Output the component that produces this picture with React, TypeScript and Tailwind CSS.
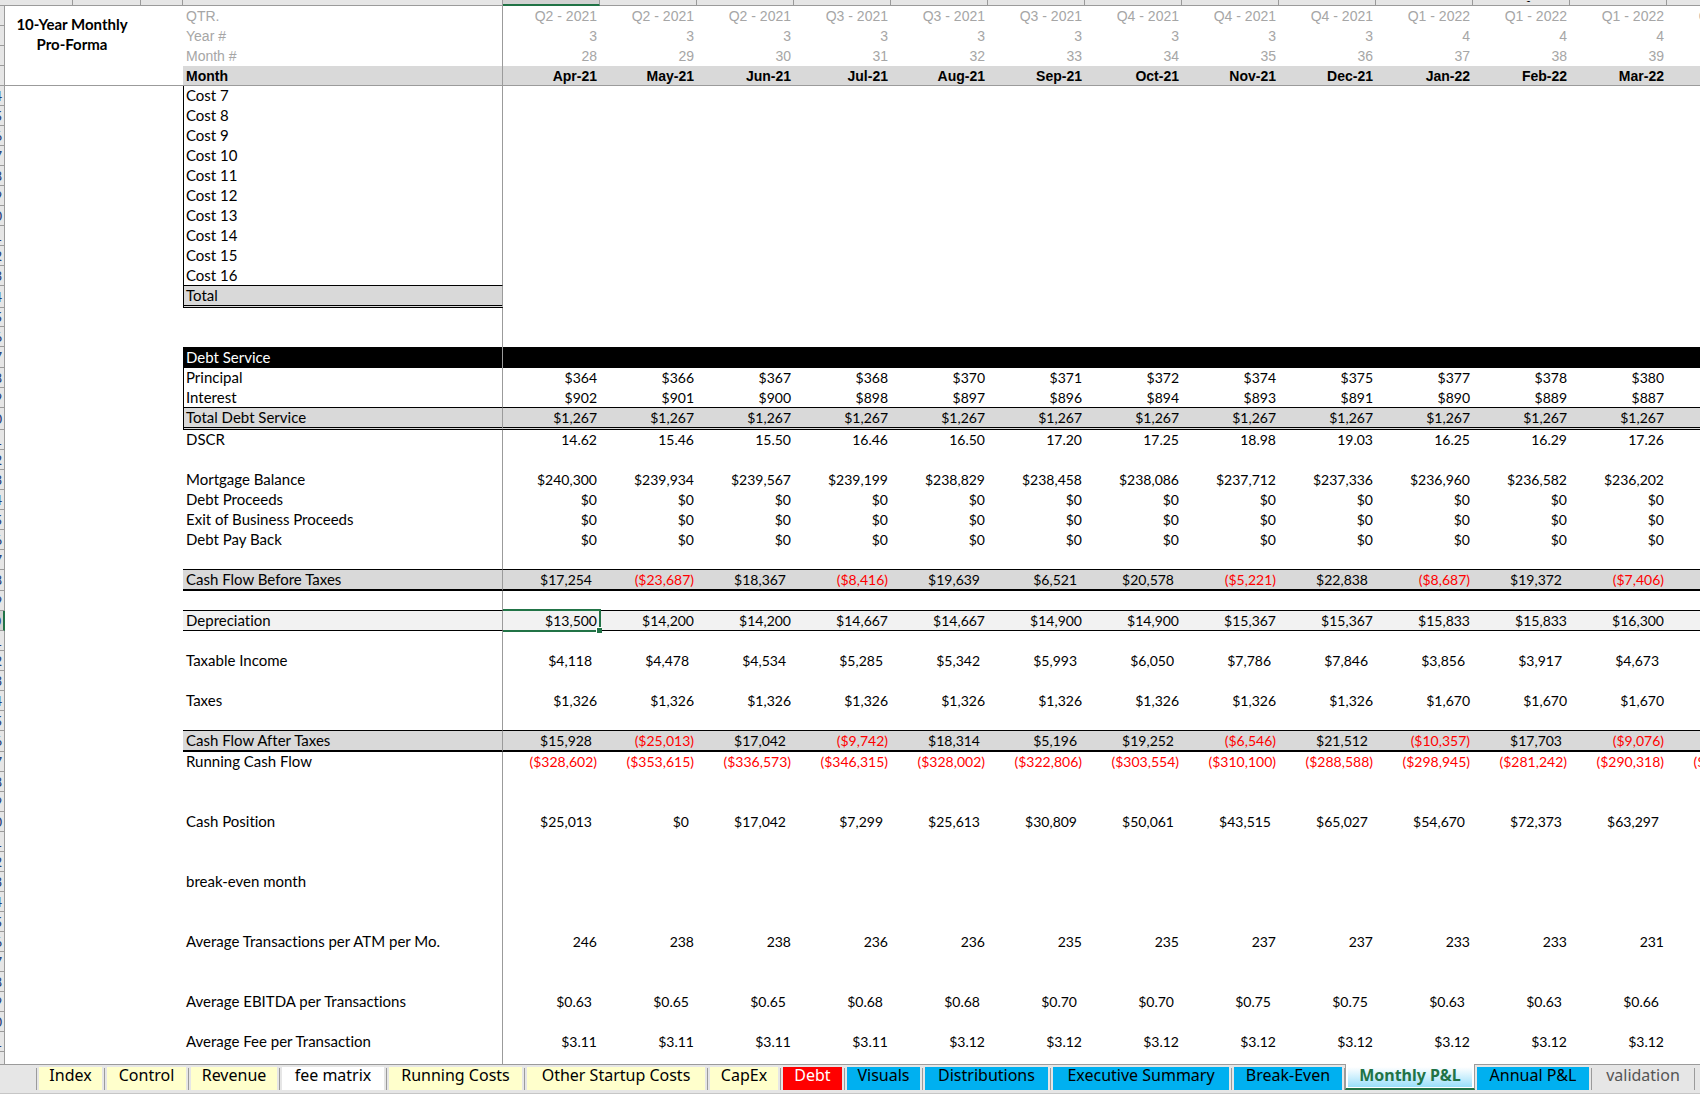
import React, { useState } from 'react'
import clsx from 'clsx'

type Variant = 'plain' | 'cost' | 'total' | 'section' | 'debt' | 'summary' | 'shaded'

interface Row {
  label?: string
  variant?: Variant
  values?: string[]
  // accounting format leaves room for a closing bracket
  accounting?: boolean
  height?: string
  // rule drawn below the row, above the next one
  rule?: boolean
}

const columns = ['AG', 'AH', 'AI', 'AJ', 'AK', 'AL', 'AM', 'AN', 'AO', 'AP', 'AQ', 'AR', 'AS']

const list = (text: string) => text.split(' ')
const same = (value: string) => columns.slice(0, 12).map(() => value)

const quarters = [
  'Q2 - 2021', 'Q2 - 2021', 'Q2 - 2021', 'Q3 - 2021', 'Q3 - 2021', 'Q3 - 2021', 'Q4 - 2021',
  'Q4 - 2021', 'Q4 - 2021', 'Q1 - 2022', 'Q1 - 2022', 'Q1 - 2022', 'Q2 - 2022'
]
const years = list('3 3 3 3 3 3 3 3 3 4 4 4')
const monthNumbers = list('28 29 30 31 32 33 34 35 36 37 38 39')
const months = list('Apr-21 May-21 Jun-21 Jul-21 Aug-21 Sep-21 Oct-21 Nov-21 Dec-21 Jan-22 Feb-22 Mar-22')

const rows: Row[] = [
  { label: 'Cost 7', variant: 'cost' },
  { label: 'Cost 8', variant: 'cost' },
  { label: 'Cost 9', variant: 'cost' },
  { label: 'Cost 10', variant: 'cost' },
  { label: 'Cost 11', variant: 'cost' },
  { label: 'Cost 12', variant: 'cost' },
  { label: 'Cost 13', variant: 'cost' },
  { label: 'Cost 14', variant: 'cost' },
  { label: 'Cost 15', variant: 'cost' },
  { label: 'Cost 16', variant: 'cost', rule: true },
  { label: 'Total', variant: 'total', height: 'h-[22px]' },
  { height: 'h-[19px]' },
  {},
  { label: 'Debt Service', variant: 'section', height: 'h-[21px]' },
  { label: 'Principal', variant: 'cost', values: list('$364 $366 $367 $368 $370 $371 $372 $374 $375 $377 $378 $380') },
  { label: 'Interest', variant: 'cost', rule: true, values: list('$902 $901 $900 $898 $897 $896 $894 $893 $891 $890 $889 $887') },
  { label: 'Total Debt Service', variant: 'debt', height: 'h-[22px]', values: same('$1,267') },
  { label: 'DSCR', values: list('14.62 15.46 15.50 16.46 16.50 17.20 17.25 18.98 19.03 16.25 16.29 17.26') },
  {},
  { label: 'Mortgage Balance', values: list('$240,300 $239,934 $239,567 $239,199 $238,829 $238,458 $238,086 $237,712 $237,336 $236,960 $236,582 $236,202') },
  { label: 'Debt Proceeds', values: same('$0') },
  { label: 'Exit of Business Proceeds', values: same('$0') },
  { label: 'Debt Pay Back', values: same('$0') },
  { rule: true },
  { label: 'Cash Flow Before Taxes', variant: 'summary', accounting: true, height: 'h-[21px]', values: list('$17,254 ($23,687) $18,367 ($8,416) $19,639 $6,521 $20,578 ($5,221) $22,838 ($8,687) $19,372 ($7,406)') },
  { rule: true },
  { label: 'Depreciation', variant: 'shaded', values: list('$13,500 $14,200 $14,200 $14,667 $14,667 $14,900 $14,900 $15,367 $15,367 $15,833 $15,833 $16,300') },
  {},
  { label: 'Taxable Income', accounting: true, values: list('$4,118 $4,478 $4,534 $5,285 $5,342 $5,993 $6,050 $7,786 $7,846 $3,856 $3,917 $4,673') },
  {},
  { label: 'Taxes', values: list('$1,326 $1,326 $1,326 $1,326 $1,326 $1,326 $1,326 $1,326 $1,326 $1,670 $1,670 $1,670') },
  { rule: true },
  { label: 'Cash Flow After Taxes', variant: 'summary', accounting: true, height: 'h-[21px]', values: list('$15,928 ($25,013) $17,042 ($9,742) $18,314 $5,196 $19,252 ($6,546) $21,512 ($10,357) $17,703 ($9,076)') },
  { label: 'Running Cash Flow', accounting: true, values: list('($328,602) ($353,615) ($336,573) ($346,315) ($328,002) ($322,806) ($303,554) ($310,100) ($288,588) ($298,945) ($281,242) ($290,318) ($281,095)') },
  {},
  {},
  { label: 'Cash Position', accounting: true, values: list('$25,013 $0 $17,042 $7,299 $25,613 $30,809 $50,061 $43,515 $65,027 $54,670 $72,373 $63,297') },
  {},
  {},
  { label: 'break-even month' },
  {},
  {},
  { label: 'Average Transactions per ATM per Mo.', values: list('246 238 238 236 236 235 235 237 237 233 233 231') },
  {},
  {},
  { label: 'Average EBITDA per Transactions', accounting: true, values: list('$0.63 $0.65 $0.65 $0.68 $0.68 $0.70 $0.70 $0.75 $0.75 $0.63 $0.63 $0.66') },
  {},
  { label: 'Average Fee per Transaction', values: list('$3.11 $3.11 $3.11 $3.11 $3.12 $3.12 $3.12 $3.12 $3.12 $3.12 $3.12 $3.12') }
]

const labelFills: Record<Variant, string> = {
  plain: '',
  cost: '',
  total: 'bg-[#d9d9d9] border-b-3 border-b-black [border-bottom-style:double]',
  section: 'bg-black text-white',
  debt: 'bg-[#d9d9d9] border-b-3 border-b-black [border-bottom-style:double]',
  summary: 'bg-[#d9d9d9] border-b-2 border-b-black',
  shaded: 'bg-[#f2f2f2] border-b border-b-black'
}

const valueFills: Record<Variant, string> = { ...labelFills, total: '' }

const sheets = [
  { name: 'Index', width: 'w-[68px]', color: 'bg-[#ffffcc]' },
  { name: 'Control', width: 'w-[84px]', color: 'bg-[#ffffcc]' },
  { name: 'Revenue', width: 'w-[91px]', color: 'bg-[#ffffcc]' },
  { name: 'fee matrix', width: 'w-[107px]', color: 'bg-white' },
  { name: 'Running Costs', width: 'w-[138px]', color: 'bg-[#ffffcc]' },
  { name: 'Other Startup Costs', width: 'w-[183px]', color: 'bg-[#ffffcc]' },
  { name: 'CapEx', width: 'w-[73px]', color: 'bg-[#ffffcc]' },
  { name: 'Debt', width: 'w-[64px]', color: 'bg-[#ff0000] text-white' },
  { name: 'Visuals', width: 'w-[78px]', color: 'bg-[#00b0f0]' },
  { name: 'Distributions', width: 'w-[128px]', color: 'bg-[#00b0f0]' },
  { name: 'Executive Summary', width: 'w-[181px]', color: 'bg-[#00b0f0]' },
  { name: 'Break-Even', width: 'w-[113px]', color: 'bg-[#00b0f0]' },
  { name: 'Monthly P&L', width: 'w-[130px]', color: 'bg-linear-to-b from-white to-[#99dffa]' },
  { name: 'Annual P&L', width: 'w-[117px]', color: 'bg-[#00b0f0]' },
  { name: 'validation', width: 'w-[103px]', color: 'text-[#555555]' }
]

// The strip is only a few pixels wide, so just the edge of the last digit shows
const RowNumber: React.FC<{ value?: number; selected?: boolean }> = ({ value, selected }) => (
  <th
    className={clsx(
      'border-b border-b-[#9b9b9b] p-0 font-normal text-[#1f3f7a]',
      selected ? 'border-r-2 border-r-[#217346] bg-[#d2d2d2]' : 'border-r border-r-[#9b9b9b] bg-[#e6e6e6]'
    )}
  >
    {value !== undefined && <div className="flex h-4 justify-end overflow-hidden pr-[2px]">{value % 10}</div>}
  </th>
)

const HeaderRow: React.FC<{ label: string; values: string[]; title?: boolean }> = ({ label, values, title }) => (
  <tr className="h-5 font-['Liberation_Sans',sans-serif] text-[#a6a6a6]">
    <RowNumber />
    {title && (
      <th rowSpan={3} colSpan={2} className="p-0 pr-[2px] pb-1 text-center font-[Lato,sans-serif] text-[15px] leading-5 font-bold text-black">
        10-Year Monthly
        <br />
        Pro-Forma
      </th>
    )}
    <td></td>
    <td className="border-r border-r-[#9b9b9b] py-0 pl-[3px]">{label}</td>
    {columns.map((column, i) => (
      <td key={column} className="py-0 pr-[3px] text-right">{values[i]}</td>
    ))}
  </tr>
)

const SheetRow: React.FC<{ row: Row; number: number }> = ({ row, number }) => {
  const variant = row.variant ?? 'plain'
  const boxed = ['cost', 'total', 'section', 'debt'].includes(variant)
  const selected = row.label === 'Depreciation'
  // the cost list has no figures in view, so its rule stops at the label
  const valueRule = row.rule && row.label !== 'Cost 16'

  return (
    <tr className={row.height ?? 'h-5'}>
      <RowNumber value={number} selected={selected} />
      <td></td>
      <td></td>
      <td></td>
      <td
        className={clsx(
          'border-r border-r-[#9b9b9b] pt-0 pb-[2px] text-[15px]',
          boxed ? 'border-l border-l-black pl-[2px]' : 'pl-[3px]',
          labelFills[variant],
          row.rule && 'border-b border-b-black'
        )}
      >
        {row.label}
      </td>
      {columns.map((column, i) => {
        const value = row.values?.[i] ?? ''
        const negative = value.startsWith('(')
        const active = selected && i === 0
        return (
          <td
            key={column}
            className={clsx(
              'py-0 text-right',
              row.accounting && !negative ? 'pr-2' : 'pr-[3px]',
              negative && 'text-[#ff0000]',
              valueFills[variant],
              valueRule && 'border-b border-b-black',
              active && 'relative'
            )}
          >
            {value}
            {active && (
              <span className="absolute -top-[2px] -right-px -bottom-[2px] left-0 border-y-2 border-r-2 border-[#217346]">
                <span className="absolute -right-[3px] -bottom-[3px] size-[6px] border-t border-l border-white bg-[#217346]"></span>
              </span>
            )}
          </td>
        )
      })}
    </tr>
  )
}

export default function App() {
  const [activeSheet, setActiveSheet] = useState('Monthly P&L')

  return (
    <div className="flex min-h-screen flex-col overflow-hidden bg-white text-black">
      <div className="overflow-hidden">
        <table className="w-[1764px] table-fixed border-separate border-spacing-0 font-[Lato,sans-serif] text-[14px] leading-4 [font-variant-ligatures:none]">
          <colgroup>
            <col className="w-[5px]" />
            <col className="w-[68px]" />
            <col className="w-[68px]" />
            <col className="w-[42px]" />
            <col className="w-[320px]" />
            {columns.map(column => (
              <col key={column} className="w-[97px]" />
            ))}
          </colgroup>
          <thead>
            <tr className="h-[6px] bg-[#e6e6e6] font-['Liberation_Sans',sans-serif]">
              {['', 'A', 'B', 'C', 'D', ...columns].map((column, i) => (
                <th
                  key={i}
                  aria-label={column}
                  className={clsx(
                    'p-0 font-normal',
                    i > 0 && 'border-r border-r-[#9b9b9b]',
                    i === 5 ? 'border-b-2 border-b-[#217346] bg-[#d2d2d2]' : 'border-b border-b-[#9b9b9b]'
                  )}
                >
                  {/* only the tail of the Q reaches into view */}
                  <div className="flex h-1 items-end justify-center overflow-hidden text-[15px] leading-[22px]">
                    {column === 'AQ' && column}
                  </div>
                </th>
              ))}
            </tr>
            <HeaderRow label="QTR." values={quarters} title />
            <HeaderRow label="Year #" values={years} />
            <HeaderRow label="Month #" values={monthNumbers} />
            <tr className="h-5 text-left font-['Liberation_Sans',sans-serif]">
              <RowNumber />
              <td className="border-b border-b-[#9b9b9b]"></td>
              <td className="border-b border-b-[#9b9b9b]"></td>
              <td className="border-b border-b-[#9b9b9b]"></td>
              <th className="border-r border-b border-[#9b9b9b] bg-[#d9d9d9] py-0 pl-[3px]">Month</th>
              {columns.map((column, i) => (
                <th key={column} className="border-b border-b-[#9b9b9b] bg-[#d9d9d9] py-0 pr-[3px] text-right">{months[i]}</th>
              ))}
            </tr>
          </thead>
          <tbody>
            {rows.map((row, i) => (
              <SheetRow key={i} row={row} number={184 + i} />
            ))}
            <tr className="h-3">
              <th className="border-r border-r-[#9b9b9b] bg-[#e6e6e6] p-0"></th>
              <td colSpan={3} className="p-0"></td>
              <td className="border-r border-r-[#9b9b9b] p-0"></td>
              <td colSpan={columns.length} className="p-0"></td>
            </tr>
          </tbody>
        </table>
      </div>

      {/* Sheet tabs */}
      <nav className="flex h-[30px] border-b border-b-[#c6c6c6] bg-[#e6e6e6] font-['Noto_Sans',sans-serif] text-[16px] leading-4">
        <div className="w-9 shrink-0 border-t border-t-[#9b9b9b]"></div>
        <div className="w-px shrink-0 border-t border-t-[#9b9b9b] pt-[3px]">
          <div className="h-[22px] bg-[#9b9b9b]"></div>
        </div>
        {sheets.map(sheet => {
          const active = sheet.name === activeSheet
          return (
            <div
              key={sheet.name}
              className={clsx(
                'flex shrink-0',
                sheet.width,
                active
                  ? 'mb-[3px] border-x border-b-2 border-x-[#9b9b9b] border-b-[#217346] bg-white pt-[3px]'
                  : 'border-t border-t-[#9b9b9b] pt-[2px]'
              )}
            >
              <button
                type="button"
                onClick={() => setActiveSheet(sheet.name)}
                className={clsx(
                  'mx-[2px] flex flex-1 justify-center whitespace-nowrap',
                  active ? 'mb-px h-[20px] font-bold text-[#217346]' : 'h-[23px]',
                  sheet.color
                )}
              >
                {sheet.name}
              </button>
              {!active && <span className="mt-px h-[22px] w-px bg-[#9b9b9b]"></span>}
            </div>
          )
        })}
        <div className="flex-1 border-t border-t-[#9b9b9b]"></div>
      </nav>
    </div>
  )
}
